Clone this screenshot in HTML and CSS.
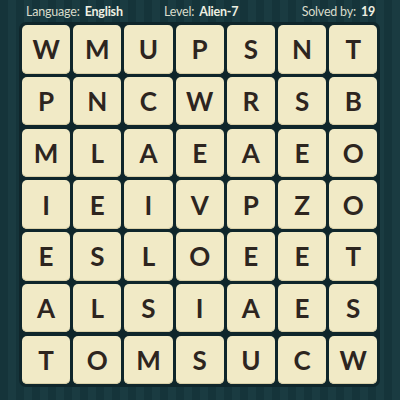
FILE: index.html
```html
<!DOCTYPE html>
<html>
<head>
<meta charset="utf-8">
<link rel="stylesheet" href="styles.css">
</head>
<body>
<div class="page">
  <div class="header">
    <span class="item">Language: <b>English</b></span>
    <span class="item mid">Level: <b>Alien-7</b></span>
    <span class="item">Solved by: <b>19</b></span>
  </div>
  <div class="board">
    <div class="tile">W</div><div class="tile">M</div><div class="tile">U</div><div class="tile">P</div><div class="tile">S</div><div class="tile">N</div><div class="tile">T</div>
    <div class="tile">P</div><div class="tile">N</div><div class="tile">C</div><div class="tile">W</div><div class="tile">R</div><div class="tile">S</div><div class="tile">B</div>
    <div class="tile">M</div><div class="tile">L</div><div class="tile">A</div><div class="tile">E</div><div class="tile">A</div><div class="tile">E</div><div class="tile">O</div>
    <div class="tile">I</div><div class="tile">E</div><div class="tile">I</div><div class="tile">V</div><div class="tile">P</div><div class="tile">Z</div><div class="tile">O</div>
    <div class="tile">E</div><div class="tile">S</div><div class="tile">L</div><div class="tile">O</div><div class="tile">E</div><div class="tile">E</div><div class="tile">T</div>
    <div class="tile">A</div><div class="tile">L</div><div class="tile">S</div><div class="tile">I</div><div class="tile">A</div><div class="tile">E</div><div class="tile">S</div>
    <div class="tile">T</div><div class="tile">O</div><div class="tile">M</div><div class="tile">S</div><div class="tile">U</div><div class="tile">C</div><div class="tile">W</div>
  </div>
</div>
</body>
</html>
```

FILE: styles.css
```css
html, body {
  margin: 0;
  padding: 0;
}
body {
  width: 400px;
  height: 400px;
  overflow: hidden;
  background: repeating-linear-gradient(90deg, #15343a 0px, #15343a 8px, #1a3b41 8px, #1a3b41 16px);
  font-family: "Lato", "DejaVu Sans", sans-serif;
}
.page {
  padding: 3px 19px 0 19px;
}
.header {
  display: flex;
  justify-content: space-between;
  height: 19px;
  padding: 0 6px 0 7px;
  color: #d9dccb;
  font-size: 12.5px;
  letter-spacing: -0.2px;
  line-height: 17px;
}
.header .mid {
  margin-right: 22px;
}
.header b {
  font-weight: 700;
  color: #eef0e2;
  margin-left: 2px;
}
.board {
  display: grid;
  grid-template-columns: repeat(7, 48.2px);
  grid-auto-rows: 48.5px;
  column-gap: 3px;
  row-gap: 3.3px;
  padding: 3px;
  background: #0f262b;
  border-radius: 7px;
  width: max-content;
}
.tile {
  background: #f1eac6;
  border-radius: 5px;
  box-shadow: inset 0 -1px 0 #d9d0a8;
  display: flex;
  align-items: center;
  justify-content: center;
  color: #2d251f;
  font-size: 26px;
  font-weight: 700;
}
```
